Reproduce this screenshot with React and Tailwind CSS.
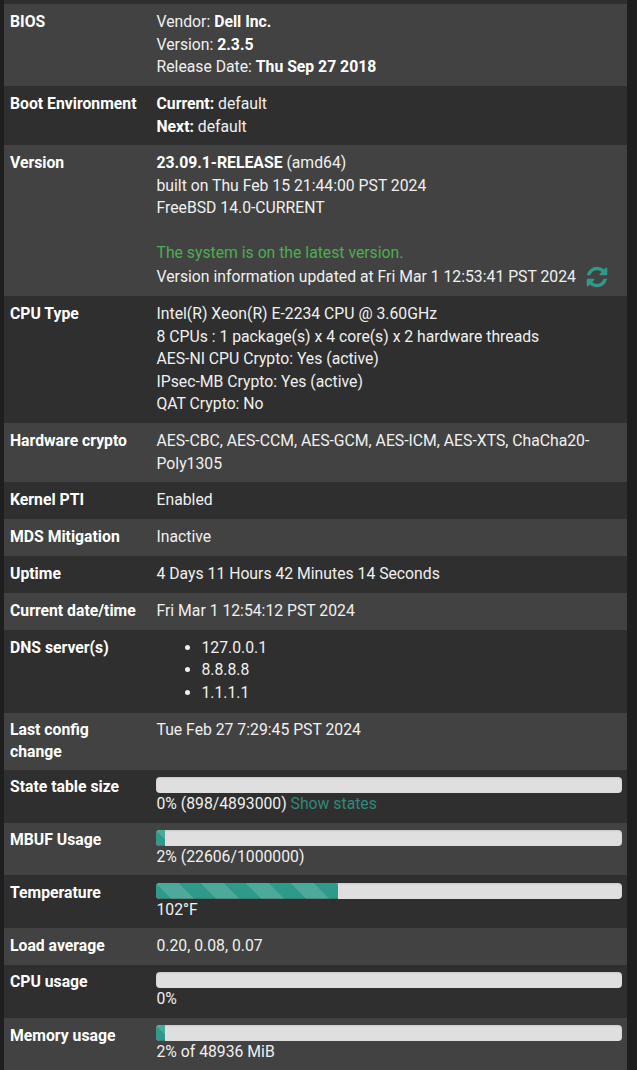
const Bar = ({ pct }) => (
  <div className="-ml-[0.5px] h-[16px] rounded-[4px] bg-[#dfdfdf] overflow-hidden shadow-[inset_0_1px_2px_rgba(0,0,0,0.1)]">
    <div
      className="h-full bg-[#2f9a8a] bg-[linear-gradient(45deg,rgba(255,255,255,0.15)_25%,transparent_25%,transparent_50%,rgba(255,255,255,0.15)_50%,rgba(255,255,255,0.15)_75%,transparent_75%,transparent)] bg-[length:45px_45px] shadow-[inset_0_-1px_0_rgba(0,0,0,0.15)]"
      style={{ width: `${pct}%` }}
    />
  </div>
);

const Row = ({ label, pad = 'py-[7.18px]', labelClass = '', children }) => (
  <div className={`flex pl-[6px] pr-[5px] ${pad} even:bg-[#424242] odd:bg-[#2f2f2f]`}>
    <div className={`w-[130px] shrink-0 font-bold text-white ${labelClass}`}>{label}</div>
    <div className="ml-[16.5px] flex-1 min-w-0">{children}</div>
  </div>
);

const RefreshIcon = () => (
  <svg viewBox="0 0 1792 1792" className="w-[24px] h-[24px] ml-[9px] shrink-0 fill-[#2f9a8a]">
    <path d="M1639 1056q0 5-1 7-64 268-268 434.5t-478 166.5q-146 0-282.5-55t-243.5-157l-129 129q-19 19-45 19t-45-19-19-45v-448q0-26 19-45t45-19h448q26 0 45 19t19 45-19 45l-137 137q71 66 161 102t187 36q134 0 250-65t186-179q11-17 53-117 8-23 30-23h192q13 0 22.5 9.5t9.5 22.5zm25-800v448q0 26-19 45t-45 19h-448q-26 0-45-19t-19-45 19-45l138-138q-148-137-349-137-134 0-250 65t-186 179q-11 17-53 117-8 23-30 23h-199q-13 0-22.5-9.5t-9.5-22.5v-7q65-268 270-434.5t480-166.5q146 0 284 55.5t245 156.5l130-129q19-19 45-19t45 19 19 45z" />
  </svg>
);

export default function App() {
  return (
    <div className="h-[1070px] overflow-hidden bg-[#1e1e1e] pl-[4px] pr-[10px] font-['Roboto',sans-serif] text-[15.75px] leading-[22.5px] text-[#f0f0f0]">
      <div className="h-[4px] bg-[#2f2f2f]" />
      <Row label="BIOS">
        <div>Vendor: <b className="text-white">Dell Inc.</b></div>
        <div>Version: <b className="text-white">2.3.5</b></div>
        <div>Release Date: <b className="text-white">Thu Sep 27 2018</b></div>
      </Row>
      <Row label="Boot Environment">
        <div><b className="text-white">Current:</b> default</div>
        <div><b className="text-white">Next:</b> default</div>
      </Row>
      <Row label="Version">
        <div><b className="text-white">23.09.1-RELEASE</b> (amd64)</div>
        <div>built on Thu Feb 15 21:44:00 PST 2024</div>
        <div>FreeBSD 14.0-CURRENT</div>
        <div className="h-[22.5px]" />
        <div className="text-[#4caf50]">The system is on the latest version.</div>
        <div className="h-[24px] flex items-center whitespace-nowrap">Version information updated at Fri Mar 1 12:53:41 PST 2024<RefreshIcon /></div>
      </Row>
      <Row label="CPU Type">
        <div>Intel(R) Xeon(R) E-2234 CPU @ 3.60GHz</div>
        <div>8 CPUs : 1 package(s) x 4 core(s) x 2 hardware threads</div>
        <div>AES-NI CPU Crypto: Yes (active)</div>
        <div>IPsec-MB Crypto: Yes (active)</div>
        <div>QAT Crypto: No</div>
      </Row>
      <Row label="Hardware crypto">AES-CBC, AES-CCM, AES-GCM, AES-ICM, AES-XTS, ChaCha20-Poly1305</Row>
      <Row label="Kernel PTI">Enabled</Row>
      <Row label="MDS Mitigation">Inactive</Row>
      <Row label="Uptime">4 Days 11 Hours 42 Minutes 14 Seconds</Row>
      <Row label="Current date/time">Fri Mar 1 12:54:12 PST 2024</Row>
      <Row label="DNS server(s)" pad="pt-[7.18px] pb-[9.18px]">
        <ul className="list-disc pl-[45px]">
          <li>127.0.0.1</li>
          <li>8.8.8.8</li>
          <li>1.1.1.1</li>
        </ul>
      </Row>
      <Row label="Last config change" pad="pt-[5.18px] pb-[6.18px]">Tue Feb 27 7:29:45 PST 2024</Row>
      <Row label="State table size" labelClass="-mt-[1px]">
        <Bar pct={0} />
        <div>0% (898/4893000) <a className="text-[#2f8a7a]">Show states</a></div>
      </Row>
      <Row label="MBUF Usage" labelClass="-mt-[1px]">
        <Bar pct={2} />
        <div>2% (22606/1000000)</div>
      </Row>
      <Row label="Temperature" labelClass="-mt-[1px]">
        <Bar pct={39} />
        <div>102°F</div>
      </Row>
      <Row label="Load average">0.20, 0.08, 0.07</Row>
      <Row label="CPU usage" labelClass="-mt-[1px]">
        <Bar pct={0} />
        <div>0%</div>
      </Row>
      <Row label="Memory usage">
        <Bar pct={2} />
        <div>2% of 48936 MiB</div>
      </Row>
    </div>
  );
}
